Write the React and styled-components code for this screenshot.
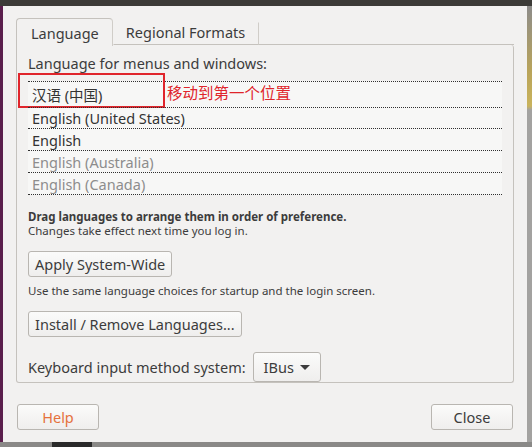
import React from "react";
import styled, { createGlobalStyle } from "styled-components";

const GlobalStyle = createGlobalStyle`
	body {
		margin: 0;
		background: #9b9a98;
		font-family: "Noto Sans", "Open Sans", sans-serif;
	}
`

const Screen = styled.div`
	width: 532px;
	height: 447px;
	display: flex;
	flex-direction: column;
	overflow: hidden;
	background: #8f8e8c;
`

const TitleEdge = styled.div`
	height: 6px;
	flex: none;
	background: #3c3b37;
`

const Middle = styled.div`
	display: flex;
	height: 436px;
	flex: none;
`

const PurpleEdge = styled.div`
	width: 3px;
	background: #5a1e4c;
`

const Desktop = styled.div`
	flex: 1;
	background: linear-gradient(to bottom, #8d8c8a 0px, #b9a45a 66px, #c9b35c 100px, #a3a2a0 104px, #a3a2a0 100%);
`

const BottomEdge = styled.div`
	flex: 1;
	background: linear-gradient(to right, #8a8987 0px, #8a8987 52px, #2a2a2a 52px, #2a2a2a 92px, #8a8987 92px);
`

const Dialog = styled.div`
	width: 524px;
	box-sizing: border-box;
	padding: 12px 13px 13px 13px;
	background: #f2f1f0;
	color: #3c3c3c;
	display: flex;
	flex-direction: column;
`

const Tabs = styled.div`
	display: flex;
	align-items: flex-end;
	height: 27px;
`

const Tab = styled.div`
	box-sizing: border-box;
	height: ${p => p.active ? "28px" : "23px"};
	margin-bottom: ${p => p.active ? "-1px" : "0"};
	padding: ${p => p.active ? "0 13px 0 14px" : "0 13px 3px 12px"};
	display: flex;
	align-items: center;
	font-size: 14.5px;
	color: #3c3c3c;
	background: #f2f1f0;
	border: 1px solid ${p => p.active ? "#c5c2bd" : "transparent"};
	border-right-color: #d0cdc8;
	border-bottom: ${p => p.active ? "none" : "1px solid #c5c2bd"};
	border-radius: ${p => p.active ? "4px 4px 0 0" : "0"};
	position: relative;
	z-index: ${p => p.active ? 1 : 0};
`

const TabFill = styled.div`
	flex: 1;
	height: 1px;
	background: #c5c2bd;
	align-self: flex-end;
`

const Frame = styled.div`
	box-sizing: border-box;
	height: 351px;
	border: 1px solid #c5c2bd;
	border-top: none;
	border-radius: 0 3px 3px 3px;
	padding: 9px 11px 0 11px;
	display: flex;
	flex-direction: column;
`

const Label = styled.div`
	font-size: 14.5px;
	line-height: 19px;
`

const List = styled.div`
	margin-top: 8px;
	width: 474px;
	background: #f7f7f6;
	border-bottom: 1px dotted #303030;
`

const Row = styled.div`
	position: relative;
	box-sizing: border-box;
	height: ${p => p.h}px;
	border-top: 1px dotted #303030;
	padding-left: 4px;
	display: flex;
	align-items: center;
	font-size: 14.5px;
	font-family: "Noto Sans", "Noto Sans CJK SC", sans-serif;
	color: ${p => p.muted ? "#8d8d8d" : "#333"};
`

const Note = styled.div`
	position: absolute;
	left: -10px;
	top: -9px;
	display: flex;
	align-items: center;
	gap: 2px;
`

const NoteBox = styled.div`
	width: 147px;
	height: 35px;
	box-sizing: border-box;
	border: 2px solid #e0252b;
`

const NoteText = styled.span`
	font-family: "Noto Sans CJK SC", sans-serif;
	font-size: 15.5px;
	color: #e0252b;
	margin-top: 2px;
`

const Hint = styled.div`
	font-size: 11.5px;
	line-height: 14px;
	font-weight: ${p => p.bold ? 700 : 400};
	margin-top: ${p => p.gap || 0}px;
`

const Button = styled.button`
	box-sizing: border-box;
	height: 26px;
	margin-top: 13px;
	align-self: flex-start;
	padding: 0 ${p => p.pad || 6}px;
	border: 1px solid #b9b6b1;
	border-radius: 3px;
	background: linear-gradient(to bottom, #fbfbfa, #efeeed);
	font-family: "Noto Sans", sans-serif;
	font-size: 14.5px;
	color: ${p => p.accent ? "#e5713d" : "#3c3c3c"};
	width: ${p => p.w ? p.w + "px" : "auto"};
`

const KeyRow = styled.div`
	margin-top: 15px;
	display: flex;
	align-items: center;
	gap: 7px;
	font-size: 14.5px;
`

const Combo = styled.div`
	box-sizing: border-box;
	height: 30px;
	width: 68px;
	padding: 0 10px;
	border: 1px solid #b9b6b1;
	border-radius: 3px;
	background: linear-gradient(to bottom, #fbfbfa, #efeeed);
	display: flex;
	align-items: center;
	justify-content: space-between;
`

const Arrow = styled.span`
	width: 0;
	height: 0;
	border-left: 5px solid transparent;
	border-right: 5px solid transparent;
	border-top: 5px solid #3c3c3c;
`

const Footer = styled.div`
	margin-top: 8px;
	display: flex;
	justify-content: space-between;
	padding: 0 1px;
`

const languages = [
	{ name: "汉语 (中国)", h: 26 },
	{ name: "English (United States)", h: 21 },
	{ name: "English", h: 22 },
	{ name: "English (Australia)", h: 22, muted: true },
	{ name: "English (Canada)", h: 22, muted: true },
]

const App = () => (
	<Screen>
		<GlobalStyle />
		<TitleEdge />
		<Middle>
			<PurpleEdge />
			<Dialog>
				<Tabs>
					<Tab active>Language</Tab>
					<Tab>Regional Formats</Tab>
					<TabFill />
				</Tabs>
				<Frame>
					<Label>Language for menus and windows:</Label>
					<List>
						{languages.map((lang, index) => (
							<Row key={index} h={lang.h} muted={lang.muted}>
								{lang.name}
								{index === 0 && (
									<Note>
										<NoteBox />
										<NoteText>移动到第一个位置</NoteText>
									</Note>
								)}
							</Row>
						))}
					</List>
					<Hint bold gap={15}>Drag languages to arrange them in order of preference.</Hint>
					<Hint>Changes take effect next time you log in.</Hint>
					<Button>Apply System-Wide</Button>
					<Hint gap={7}>Use the same language choices for startup and the login screen.</Hint>
					<Button>Install / Remove Languages...</Button>
					<KeyRow>
						Keyboard input method system:
						<Combo>IBus <Arrow /></Combo>
					</KeyRow>
				</Frame>
				<Footer>
					<Button accent w={82}>Help</Button>
					<Button w={82}>Close</Button>
				</Footer>
			</Dialog>
			<Desktop />
		</Middle>
		<BottomEdge />
	</Screen>
)

export default App;
